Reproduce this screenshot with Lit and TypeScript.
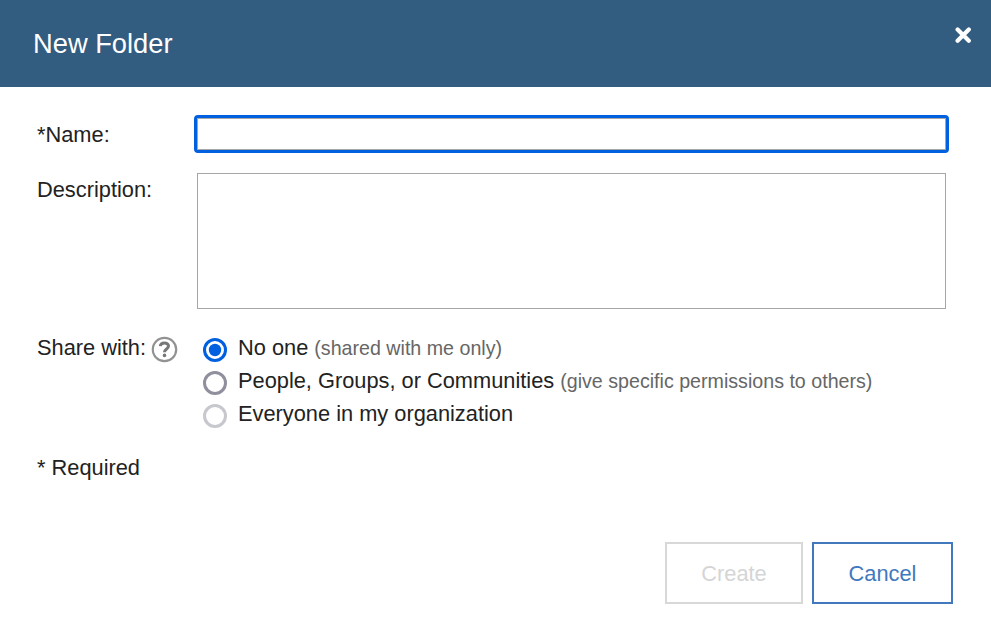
import { LitElement, html, css } from "lit";
import { customElement } from "lit/decorators.js";

@customElement("app-root")
export class AppRoot extends LitElement {
  static styles = css`
    :host { display: flex; flex-direction: column; box-sizing: border-box; width: 100%; height: 100vh; background: #fff; overflow: hidden; font: 21.8px/26px "Liberation Sans", Arial, sans-serif; color: #222; }
    * { box-sizing: border-box; }
    .header { height: 87px; flex: none; display: flex; justify-content: space-between; background: #325c80; color: #fff; padding: 27px 19px 0 33px; }
    h1 { margin: 1px 0 0; font-size: 27.3px; line-height: 32px; font-weight: 400; }
    .close { width: 18px; height: 18px; }
    .form { display: grid; grid-template-columns: 157px 755px; padding: 28px 0 0 37px; }
    .label { padding-top: 7px; white-space: nowrap; }
    .name { display: block; width: 755px; height: 38px; border: 3px solid #0060df; border-radius: 4px; box-shadow: inset 0 0 0 1px #a6a6a6; margin: 0; padding: 4px; outline: none; font: inherit; }
    .desc { display: block; width: 749px; height: 136px; margin: 20px 3px 0; border: 1px solid #a6a6a6; resize: none; font: inherit; }
    .desc-label { padding-top: 24px; }
    .share { padding-top: 26px; display: flex; gap: 5px; white-space: nowrap; }
    .help { width: 27px; height: 27px; margin-top: 1px; flex: none; }
    .options { padding: 24px 0 0 9px; }
    .option { display: flex; align-items: center; height: 33px; margin: 0; }
    .option span { margin-top: -4px; }
    .radio { width: 24px; height: 24px; flex: none; margin-right: 11px; }
    .option .hint { color: #666; font-size: 19.65px; margin-left: 6px; }
    .required { padding-left: 37px; margin-top: 23px; }
    .actions { display: flex; justify-content: flex-end; gap: 9px; padding-right: 38px; margin-top: 61px; }
    button { height: 62px; width: 141px; border: 2px solid #4178be; background: #fff; color: #4178be; font: inherit; padding: 2px 0 0; }
    .create { width: 138px; border-color: #d8d8d8; color: #d5d5d5; }
  `;
  radio(kind: string) {
    const color = kind === "on" ? "#0060df" : kind === "off" ? "#8f8f9d" : "#c7c7ce";
    return html`<svg class="radio" viewBox="0 0 24 24"><circle cx="12" cy="12" r="10.5" fill="#fff" stroke=${color} stroke-width="3"/><circle cx="12" cy="12" r=${kind === "on" ? 6.2 : 0} fill=${color}/></svg>`;
  }
  render() {
    return html`
      <div class="header"><h1>New Folder</h1><svg class="close" viewBox="0 0 18 18"><path d="M3.6 2.6 14.8 13.8M14.8 2.6 3.6 13.8" stroke="#fff" stroke-width="4.2" stroke-linecap="round"/></svg></div>
      <div class="form">
        <div class="label">*Name:</div><input class="name" />
        <div class="desc-label">Description:</div><textarea class="desc"></textarea>
        <div class="share"><span>Share with:</span><svg class="help" viewBox="0 0 27 27"><circle cx="13.5" cy="13.5" r="11.7" fill="#fff" stroke="#929292" stroke-width="2.2"/><path d="M9.3 10.2c.3-4.5 8.2-4.3 8.2-.2 0 3.1-4 2.8-4 6.3" fill="none" stroke="#777" stroke-width="3"/><circle cx="13.5" cy="19.4" r="1.8" fill="#777"/></svg></div>
        <div class="options">
          <div class="option">${this.radio("on")}<span>No one</span><span class="hint">(shared with me only)</span></div>
          <div class="option">${this.radio("off")}<span>People, Groups, or Communities</span><span class="hint">(give specific permissions to others)</span></div>
          <div class="option">${this.radio("disabled")}<span>Everyone in my organization</span></div>
        </div>
      </div>
      <div class="required">* Required</div>
      <div class="actions"><button class="create">Create</button><button>Cancel</button></div>`;
  }
}
